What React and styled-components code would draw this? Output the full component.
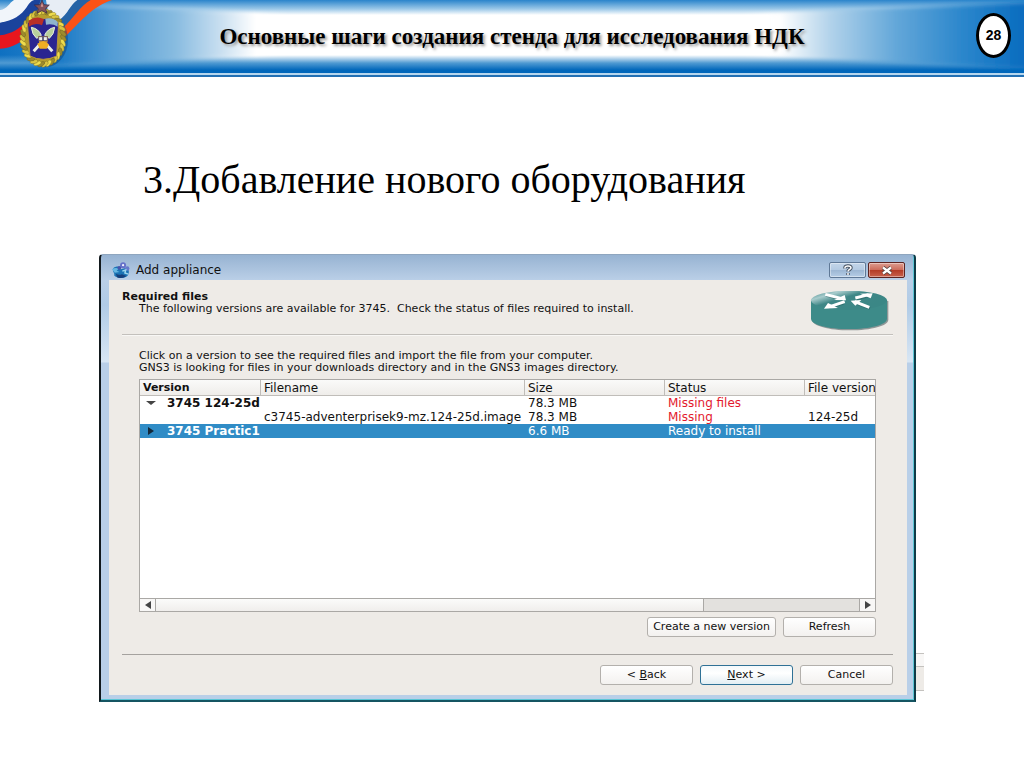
import React from "react";
import styled, { createGlobalStyle, css } from "styled-components";

const GlobalStyle = createGlobalStyle`
  body {
    margin: 0;
    background: #fff;
    color: #000;
  }
`;

const uiFont = css`
  font-family: "DejaVu Sans", sans-serif;
  font-size: 11px;
  line-height: 12px;
  color: #111;
`;

const Header = styled.header`
  position: relative;
  display: flex;
  align-items: center;
  height: 73px;
  border-bottom: 2px solid #b5d6ee;
  box-shadow: 0 2px 0 #2270b4;
  background:
    linear-gradient(
      to bottom,
      #2a84cb 0,
      #9cc8e8 9px,
      rgba(255, 255, 255, 0) 15px,
      rgba(255, 255, 255, 0) 55px,
      #4f9ad2 63px,
      #0067bb 70px
    ),
    linear-gradient(
      to right,
      #0e70c1 0,
      #2b85cb 7%,
      #65a9da 12%,
      #9ac6e6 17%,
      #d4e7f4 21%,
      #fff 25%,
      #fff 75%,
      #d4e7f4 79%,
      #9ac6e6 84%,
      #4f9cd4 90%,
      #1172c3 98%,
      #0a6cbf 100%
    );
`;

// the light middle flares out toward both ends of the bar
const HeaderArt = styled.svg`
  position: absolute;
  inset: 0;
  width: 100%;
  height: 100%;
`;

const Emblem = styled.svg`
  position: absolute;
  left: 0;
  top: 0;
`;

const HeaderTitle = styled.h1`
  position: relative;
  flex: 1;
  margin: 0;
  text-align: center;
  font-family: "Liberation Serif", serif;
  font-size: 23px;
  line-height: 26px;
  text-shadow: 2px 2px 3px #999;
`;

const PageNumber = styled.div`
  position: absolute;
  right: 13px;
  top: 13px;
  box-sizing: border-box;
  width: 35px;
  height: 45px;
  border: 3px solid #000;
  border-radius: 50%;
  background: #fff;
  text-align: center;
  font: bold 14px/39px "Liberation Sans", sans-serif;
`;

const Heading = styled.h2`
  margin: 82px 0 51px;
  padding-left: 143px;
  font-family: "Liberation Serif", serif;
  font-weight: normal;
  font-size: 40px;
  line-height: 46px;
`;

const Dialog = styled.section`
  ${uiFont}
  position: relative;
  margin: 0 108px 0 99px;
  padding: 0 7px 5px 8px;
  border: 2px solid #12191d;
  border-top: 1px solid #8fa6bf;
  border-right-color: #0e3c48;
  border-bottom-color: #155562;
  border-radius: 4px 4px 0 0;
  box-shadow: inset -1px -1px 0 #5cc6d6;
  background: linear-gradient(
    to bottom,
    #97b3d2 0,
    #bacfe7 25px,
    #b0cbe6 50px,
    #d8e6f4 107px,
    #b9cfe8 108px
  );
`;

const WindowBehind = styled.div`
  position: absolute;
  left: 100%;
  bottom: 9px;
  margin-left: 2px;
  box-sizing: border-box;
  width: 8px;
  height: 38px;
  border: solid #c4c2bf;
  border-width: 1px 0;
  background: linear-gradient(#f8f7f6 12px, #c4c2bf 12px, #c4c2bf 13px, #eeebe7 13px);
`;

const TitleBar = styled.div`
  display: flex;
  align-items: center;
  gap: 5px;
  height: 25px;
  padding: 5px 2px 0 2px;
  box-sizing: border-box;
  font-size: 12px;
`;

const TitleText = styled.span`
  flex: 1;
`;

const CaptionButton = styled.button`
  display: flex;
  align-items: center;
  justify-content: center;
  box-sizing: border-box;
  width: 37px;
  height: 16px;
  margin-right: ${(p) => (p.$close ? "0" : "-3px")};
  padding: 0;
  border: 1px solid ${(p) => (p.$close ? "#5b2321" : "#5f7896")};
  border-radius: 2px;
  box-shadow: inset 0 0 0 1px rgba(255, 255, 255, 0.4);
  background: ${(p) =>
    p.$close
      ? "linear-gradient(#dd9d91 0, #cd6d5c 48%, #b33a25 50%, #c8614c 100%)"
      : "linear-gradient(#c3d5e9 0, #b4cae2 48%, #9cb6d3 50%, #b5cde6 100%)"};
`;

const Content = styled.div`
  padding: 11px 14px 10px 13px;
  background: #eeebe7;
`;

const Intro = styled.div`
  display: flex;
  justify-content: space-between;
  height: 43px;
  padding-right: 4px;
  border-bottom: 1px solid #c3c0bc;
  box-shadow: 0 1px 0 #f8f7f5;
`;

const IntroTitle = styled.h3`
  margin: 0;
  font-size: 11px;
  line-height: 12px;
`;

const IntroText = styled.p`
  margin: 0;
  padding-left: 17px;
  white-space: pre-wrap;
`;

const Body = styled.div`
  padding: 15px 17px 17px;
  border-bottom: 1px solid #a5a29f;
`;

const Hint = styled.p`
  margin: 0 0 5px;
`;

const ListBox = styled.div`
  border: 1px solid #aaa8a5;
  background: #fff;
`;

const ListArea = styled.div`
  height: 218px;
  overflow: hidden;
`;

const Table = styled.table`
  width: 100%;
  table-layout: fixed;
  border-collapse: separate;
  border-spacing: 0;
  font-size: 12px;
  line-height: 14px;
  white-space: nowrap;
`;

const HeadCell = styled.th`
  height: 15px;
  padding: 0 0 0 3px;
  border-bottom: 1px solid #c0bdb9;
  border-left: ${(p) => (p.$first ? "none" : "1px solid #c0bdb9")};
  background: linear-gradient(#fafaf9, #efedea);
  font-size: ${(p) => (p.$first ? "11px" : "12px")};
  text-align: left;
  font-weight: ${(p) => (p.$first ? "bold" : "normal")};
`;

const Row = styled.tr`
  height: 14px;
  background: ${(p) => (p.$selected ? "#308cc6" : "none")};
  color: ${(p) => (p.$selected ? "#fff" : "#111")};
`;

const Cell = styled.td`
  padding: 0 0 0 4px;
  color: ${(p) => (p.$alert ? "#e3182d" : "inherit")};
`;

const VersionCell = styled(Cell)`
  font-weight: bold;
`;

const VersionWrap = styled.div`
  display: flex;
  align-items: center;
  gap: 9px;
`;

const Toggle = styled.button`
  display: flex;
  align-items: center;
  justify-content: center;
  width: 14px;
  height: 12px;
  padding: 0;
  border: none;
  background: none;
`;

const ScrollBar = styled.div`
  display: flex;
  height: 12px;
  border-top: 1px solid #aaa8a5;
  background: #e3e1de;
`;

const ScrollButton = styled.button`
  display: flex;
  align-items: center;
  justify-content: center;
  width: 16px;
  padding: 0;
  border: solid #aaa8a5;
  border-width: ${(p) => (p.$left ? "0 1px 0 0" : "0 0 0 1px")};
  background: #f8f7f6;
`;

const ScrollTrack = styled.div`
  flex: 1;
`;

const ScrollThumb = styled.div`
  width: 78%;
  height: 100%;
  box-sizing: border-box;
  border-right: 1px solid #aaa8a5;
  background: linear-gradient(#fbfbfa, #f0eeec);
`;

const ButtonRow = styled.div`
  display: flex;
  justify-content: flex-end;
  gap: 7px;
  padding-top: ${(p) => p.$top}px;
`;

const Button = styled.button`
  ${uiFont}
  box-sizing: border-box;
  min-width: 93px;
  height: 20px;
  padding: 0 5px;
  border: 1px solid ${(p) => (p.$primary ? "#2f7196" : "#b3b0ac")};
  border-radius: 3px;
  background: ${(p) =>
    p.$primary
      ? "linear-gradient(#f4f9fb, #fff 40%, #e3eef3)"
      : "linear-gradient(#fff, #f3f1ef)"};
`;

const columns = [
  { name: "Version", width: "120px" },
  { name: "Filename", width: "264px" },
  { name: "Size", width: "140px" },
  { name: "Status", width: "140px" },
  { name: "File version", width: "auto" },
];

const rows = [
  { version: "3745 124-25d", open: true, size: "78.3 MB", status: "Missing files", alert: true },
  {
    file: "c3745-adventerprisek9-mz.124-25d.image",
    size: "78.3 MB",
    status: "Missing",
    fileVersion: "124-25d",
    alert: true,
  },
  { version: "3745 Practic1", size: "6.6 MB", status: "Ready to install", selected: true },
];

// gold wreath leaves, placed on an ellipse round the shield
const leaves = Array.from({ length: 34 }, (_, i) => {
  const a = (i / 34) * Math.PI * 2;
  return {
    x: 129 + Math.cos(a) * 61,
    y: 114 + Math.sin(a) * 79,
    turn: (a * 180) / Math.PI + 55,
    fill: i % 3 === 0 ? "#9c8a2c" : i % 3 === 1 ? "#efdc4c" : "#d9c440",
  };
});

const HeaderGlow = () => (
  <HeaderArt viewBox="0 0 1024 73" preserveAspectRatio="none" aria-hidden="true">
    <defs>
      <linearGradient id="glowLeft" x1="60" y1="0" x2="290" y2="0" gradientUnits="userSpaceOnUse">
        <stop offset="0" stopColor="#1b7ac6" />
        <stop offset=".22" stopColor="#529cd5" />
        <stop offset=".5" stopColor="#87bbe0" />
        <stop offset=".72" stopColor="#d0e3f2" />
        <stop offset=".85" stopColor="#fff" />
        <stop offset="1" stopColor="#fff" stopOpacity="0" />
      </linearGradient>
      <linearGradient id="glowRight" x1="1024" y1="0" x2="740" y2="0" gradientUnits="userSpaceOnUse">
        <stop offset="0" stopColor="#0a6cbf" />
        <stop offset=".22" stopColor="#2c87cc" />
        <stop offset=".45" stopColor="#63a7d9" />
        <stop offset=".68" stopColor="#b1d2ea" />
        <stop offset=".86" stopColor="#fff" />
        <stop offset="1" stopColor="#fff" stopOpacity="0" />
      </linearGradient>
      <filter id="glowSoft" x="-5%" y="-20%" width="110%" height="140%">
        <feGaussianBlur stdDeviation="2" />
      </filter>
    </defs>
    <path d="M40 4L290 15V54L40 66Z" fill="url(#glowLeft)" filter="url(#glowSoft)" />
    <path d="M1034 2L740 15V54L1034 69Z" fill="url(#glowRight)" filter="url(#glowSoft)" />
  </HeaderArt>
);

const FlagEmblem = () => (
  <Emblem width="120" height="72" viewBox="0 0 360 216" aria-hidden="true">
    <path d="M0 30C22 28 28 8 42 0H106C84 14 74 44 42 60C26 66 8 66 0 70Z" fill="#f1f5fa" />
    <path d="M0 68C40 62 64 46 80 22C88 8 96 0 106 0H122L104 60C66 100 36 102 0 110Z" fill="#1b439c" />
    <path d="M0 106C34 102 60 86 84 60L94 104C64 124 40 144 0 146Z" fill="#e8161e" />
    <path d="M138 0H240C216 14 206 34 184 62L146 50Z" fill="#e7edf5" />
    <path d="M232 0H284C250 16 226 50 192 90L176 62C206 40 210 14 232 0Z" fill="#2563a6" />
    <path d="M272 0H336C278 20 252 54 196 110L188 84C222 54 240 18 272 0Z" fill="#fb5215" />
    <ellipse cx="136" cy="120" rx="68" ry="82" fill="#0b3f77" opacity=".45" />
    <ellipse cx="129" cy="114" rx="64" ry="80" fill="#b59d2c" />
    {leaves.map((l, i) => (
      <ellipse
        key={i}
        rx="12"
        ry="6"
        fill={l.fill}
        stroke="#5b5420"
        strokeWidth="1"
        transform={`translate(${l.x} ${l.y}) rotate(${l.turn})`}
      />
    ))}
    <path d="M82 68Q129 42 176 68L170 168Q129 188 90 168Z" fill="#2a2590" stroke="#b8963b" strokeWidth="3" />
    <path d="M86 62Q110 46 132 58L126 76Q106 66 86 80Z" fill="#b92f27" />
    <path d="M136 56Q160 52 173 66V80Q158 70 138 74Z" fill="#8eb5ce" />
    <path d="M101 154L155 94M157 154L103 94" stroke="#ebeee8" strokeWidth="9" />
    <path d="M94 82Q116 86 124 106L110 115Q96 104 94 82ZM164 82Q142 86 134 106L148 115Q162 104 164 82Z" fill="#b8cf9d" stroke="#e9efdf" strokeWidth="3" />
    <path d="M114 108H144V120L138 144H120Z" fill="#d1953a" />
    <path d="M116 110H142V122H116Z" fill="#f0f0e8" stroke="#2b2452" strokeWidth="2" />
    <path d="M129 110V122" stroke="#2b2452" strokeWidth="4" />
    <path d="M112 131L130 123L147 133L140 146H119Z" fill="#f0ae23" />
    <path d="M126 0L132 14L148 15L137 26L141 40L126 32L111 40L115 26L103 15L120 14Z" fill="#815059" stroke="#302645" strokeWidth="2" />
    <path d="M126 8L130 20H122Z" fill="#d99993" />
  </Emblem>
);

const AppIcon = () => (
  <svg width="20" height="18" viewBox="0 0 51 48" aria-hidden="true">
    <path d="M4 24C4 16 13 14 20 15L25 22L40 18C48 22 48 33 43 39C34 48 14 47 7 38C10 33 4 31 4 24Z" fill="#1b74b5" />
    <path d="M1 22Q10 16 20 20L14 26L22 29L9 31Z" fill="#66b7e1" />
    <path d="M12 34Q20 39 28 35L40 40Q28 49 15 43Z" fill="#163f7b" />
    <circle cx="31" cy="11" r="8" fill="#6571c9" />
    <circle cx="31" cy="11" r="3" fill="#f1f1ff" />
    <circle cx="42" cy="20" r="6" fill="#6579cc" />
    <circle cx="21" cy="18" r="5" fill="#4954ac" />
    <path d="M29 27L38 24L36 32L45 35" fill="none" stroke="#9cd7ef" strokeWidth="4" />
  </svg>
);

const RouterIcon = () => (
  <svg width="79" height="42" viewBox="0 0 237 126" aria-hidden="true">
    <defs>
      <linearGradient id="routerTop" x1="0" y1="0.2" x2="0.7" y2="0.8">
        <stop offset="0" stopColor="#5f9c9d" />
        <stop offset=".2" stopColor="#a9cccd" />
        <stop offset=".48" stopColor="#3f8787" />
        <stop offset="1" stopColor="#3b8786" />
      </linearGradient>
    </defs>
    <path d="M6 30V86C6 104 56 118 120 118S235 104 235 86V30Z" fill="#8f9797" />
    <path d="M3 26V83C3 101 54 114 117 114S231 101 231 83V26Z" fill="#3d8b89" />
    <ellipse cx="117" cy="28" rx="114" ry="29" fill="url(#routerTop)" />
    <g stroke="#245c5c" strokeWidth="9" fill="none" transform="translate(2 3)" opacity=".45">
      <path d="M46 10L96 23M136 21L180 10M54 47L100 33M132 32L178 49" />
    </g>
    <g stroke="#fff" strokeWidth="9" fill="none">
      <path d="M46 10L96 23M136 21L176 11M60 47L104 32M134 32L178 49" />
    </g>
    <g fill="#fff">
      <path d="M72 27L108 28L104 12Z" />
      <path d="M150 8L188 7L182 22Z" />
      <path d="M54 36L42 53L84 51Z" />
      <path d="M122 29L154 27L136 44Z" />
    </g>
  </svg>
);

const App = () => {
  return (
    <>
      <GlobalStyle />
      <Header>
        <HeaderGlow />
        <FlagEmblem />
        <HeaderTitle>Основные шаги создания стенда для исследования НДК</HeaderTitle>
        <PageNumber>28</PageNumber>
      </Header>
      <main>
        <Heading>3.Добавление нового оборудования</Heading>
        <Dialog aria-label="Add appliance">
          <WindowBehind />
          <TitleBar>
            <AppIcon />
            <TitleText>Add appliance</TitleText>
            <CaptionButton aria-label="Help">
              <svg width="12" height="12" viewBox="0 0 12 12">
                <path d="M3 4.5V3.5C3 1.5 9 1.5 9 4C9 5.5 6 5.5 6 7.5M6 9V11" fill="none" stroke="#444f5e" strokeWidth="3.4" />
                <path d="M3 4.5V3.5C3 1.5 9 1.5 9 4C9 5.5 6 5.5 6 7.5M6 9V11" fill="none" stroke="#fff" strokeWidth="1.5" />
              </svg>
            </CaptionButton>
            <CaptionButton $close aria-label="Close">
              <svg width="14" height="9" viewBox="0 0 14 9">
                <path d="M3 1.5L11 7.5M11 1.5L3 7.5" stroke="#54413f" strokeWidth="4" />
                <path d="M3 1.5L11 7.5M11 1.5L3 7.5" stroke="#fff" strokeWidth="2.2" />
              </svg>
            </CaptionButton>
          </TitleBar>
          <Content>
            <Intro>
              <div>
                <IntroTitle>Required files</IntroTitle>
                <IntroText>
                  {"The following versions are available for 3745.  Check the status of files required to install."}
                </IntroText>
              </div>
              <RouterIcon />
            </Intro>
            <Body>
              <Hint>
                Click on a version to see the required files and import the file from your computer.
                <br />
                GNS3 is looking for files in your downloads directory and in the GNS3 images directory.
              </Hint>
              <ListBox>
                <ListArea>
                  <Table>
                    <colgroup>
                      {columns.map((c) => (
                        <col key={c.name} width={c.width} />
                      ))}
                    </colgroup>
                    <thead>
                      <tr>
                        {columns.map((c, i) => (
                          <HeadCell key={c.name} $first={i === 0}>
                            {c.name}
                          </HeadCell>
                        ))}
                      </tr>
                    </thead>
                    <tbody>
                      {rows.map((r, i) => (
                        <Row key={i} $selected={r.selected}>
                          <VersionCell>
                            {r.version && (
                              <VersionWrap>
                                <Toggle aria-label={r.open ? "Collapse" : "Expand"}>
                                  <svg width="10" height="8" viewBox="0 0 10 8">
                                    <path d={r.open ? "M0 2H10L5 6Z" : "M2 0L8 4L2 8Z"} fill={r.open ? "#444" : "#12283a"} />
                                  </svg>
                                </Toggle>
                                {r.version}
                              </VersionWrap>
                            )}
                          </VersionCell>
                          <Cell>{r.file}</Cell>
                          <Cell>{r.size}</Cell>
                          <Cell $alert={r.alert}>{r.status}</Cell>
                          <Cell>{r.fileVersion}</Cell>
                        </Row>
                      ))}
                    </tbody>
                  </Table>
                </ListArea>
                <ScrollBar>
                  <ScrollButton $left aria-label="Scroll left">
                    <svg width="6" height="8" viewBox="0 0 6 8">
                      <path d="M6 0V8L0 4Z" fill="#444" />
                    </svg>
                  </ScrollButton>
                  <ScrollTrack>
                    <ScrollThumb />
                  </ScrollTrack>
                  <ScrollButton aria-label="Scroll right">
                    <svg width="6" height="8" viewBox="0 0 6 8">
                      <path d="M0 0V8L6 4Z" fill="#444" />
                    </svg>
                  </ScrollButton>
                </ScrollBar>
              </ListBox>
              <ButtonRow $top={5}>
                <Button>Create a new version</Button>
                <Button>Refresh</Button>
              </ButtonRow>
            </Body>
            <ButtonRow $top={10}>
              <Button>
                &lt; <u>B</u>ack
              </Button>
              <Button $primary>
                <u>N</u>ext &gt;
              </Button>
              <Button>Cancel</Button>
            </ButtonRow>
          </Content>
        </Dialog>
      </main>
    </>
  );
};

export default App;
